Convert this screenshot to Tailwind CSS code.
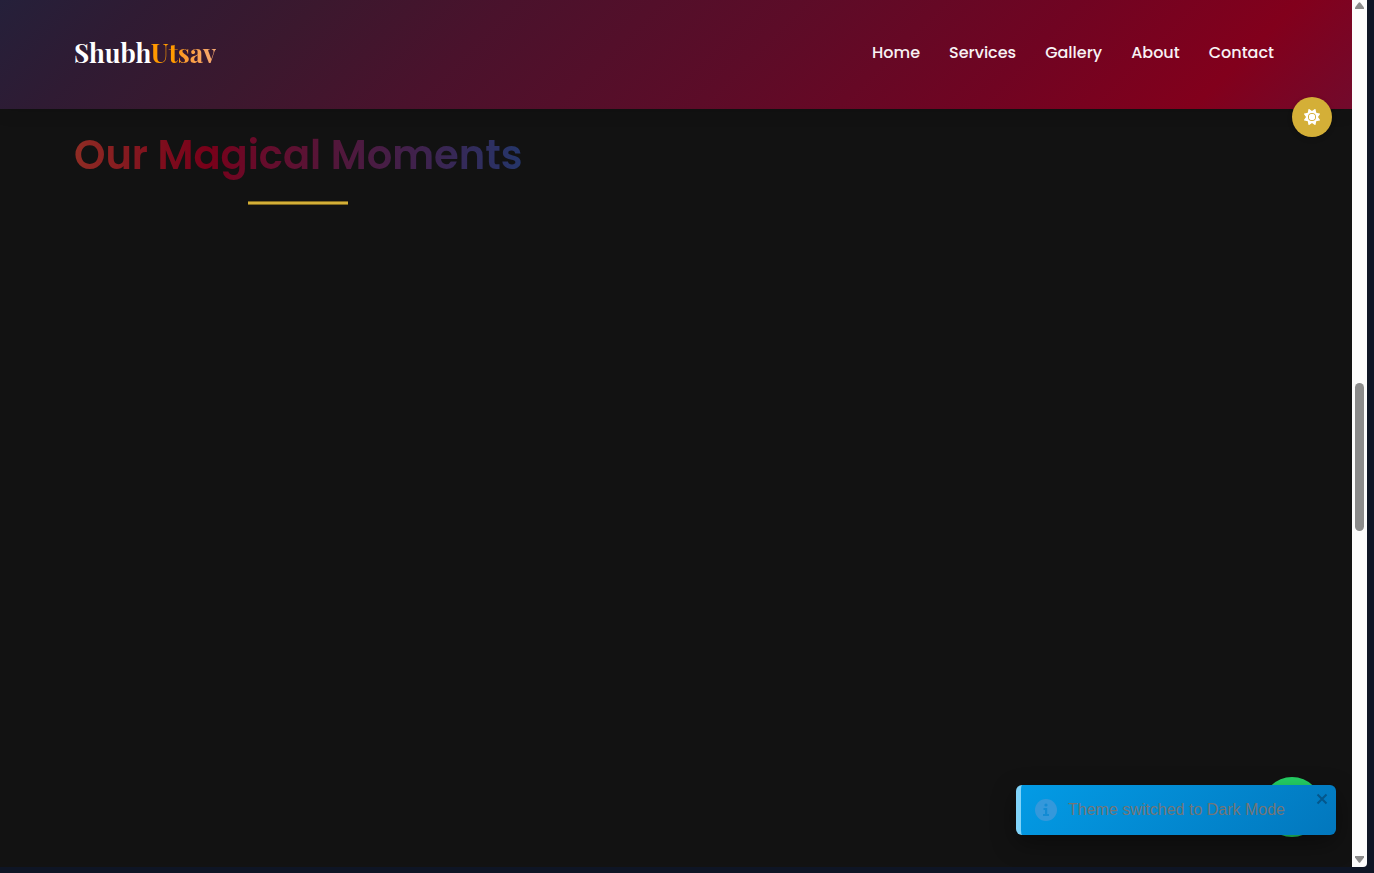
<!DOCTYPE html>
<html lang="en">
<head>
<meta charset="utf-8">
<meta name="viewport" content="width=device-width, initial-scale=1">
<title>ShubhUtsav</title>
<script src="https://cdn.jsdelivr.net/npm/@tailwindcss/browser@4"></script>
</head>
<body class="h-screen overflow-hidden bg-[#0e1525] pr-[7px] pb-[6px] font-['Poppins','Inter',sans-serif]">
<div class="flex h-full overflow-hidden rounded-br">
  <div class="relative flex min-w-0 flex-1 flex-col overflow-hidden bg-[#121212]">
    <header class="flex h-[109px] shrink-0 items-center justify-between bg-[linear-gradient(135deg,#25203a_0%,#2f1b33_10%,#3b182e_22%,#4a122c_35%,#5c0c28_55%,#700422_74%,#82001c_89%,#720a2c_100%)] pr-[78px] pb-1 pl-[74px] shadow-[0_4px_15px_rgba(0,0,0,0.1)]">
      <a href="#" class="font-['Playfair_Display','Liberation_Serif',serif] text-[26px] leading-9 font-bold text-white">Shubh<span class="bg-linear-to-r from-[#ff9900] from-40% to-[#f4a873] bg-clip-text text-transparent">Utsav</span></a>
      <nav class="flex items-center gap-[29px] text-base font-medium text-[#f8f2f4]">
        <a href="#home">Home</a>
        <a href="#services">Services</a>
        <a href="#gallery">Gallery</a>
        <a href="#about">About</a>
        <a href="#contact">Contact</a>
      </nav>
    </header>
    <main class="flex flex-1 flex-col items-start px-[74px] pt-5">
      <div class="flex flex-col items-center">
        <h2 class="bg-[linear-gradient(90deg,#8f2c24_0%,#7c0a1c_22%,#780019_30%,#6a0a28_39%,#50183c_60%,#3c2450_80%,#25366a_100%)] bg-clip-text text-[40px] leading-[52px] font-semibold text-transparent">Our Magical Moments</h2>
        <div class="mt-5 h-1 w-[100px] border-y border-[#81691f] bg-[#d4af37]"></div>
      </div>
    </main>

    <button type="button" aria-label="Toggle theme" class="absolute top-[97px] right-5 flex size-10 items-center justify-center rounded-full bg-[#d4af37] shadow-[0_2px_5px_rgba(0,0,0,0.2)]">
      <svg viewBox="0 0 512 512" class="size-4 fill-white"><path d="M361.500 1.200c5 2.100 8.600 6.600 9.600 11.900L391 121l107.900 19.800c5.300 1 9.800 4.600 11.900 9.600s1.500 10.700-1.600 15.200L446.900 256l62.300 90.300c3.100 4.500 3.700 10.200 1.600 15.200s-6.600 8.600-11.900 9.600L391 391 371.100 498.900c-1 5.300-4.600 9.800-9.600 11.900s-10.700 1.500-15.200-1.600L256 446.900l-90.300 62.300c-4.500 3.100-10.200 3.700-15.200 1.600s-8.600-6.600-9.600-11.900L121 391 13.100 371.100c-5.300-1-9.800-4.600-11.900-9.600s-1.500-10.700 1.600-15.200L65.100 256 2.800 165.700c-3.100-4.500-3.700-10.200-1.600-15.200s6.600-8.600 11.900-9.600L121 121 140.900 13.100c1-5.300 4.600-9.800 9.600-11.900s10.700-1.500 15.200 1.600L256 65.100 346.300 2.800c4.500-3.100 10.200-3.700 15.200-1.600zM160 256a96 96 0 1 1 192 0 96 96 0 1 1-192 0zm224 0a128 128 0 1 0-256 0 128 128 0 1 0 256 0z"/><circle cx="256" cy="256" r="98"/></svg>
    </button>

    <a href="#chat" aria-label="Chat with us" class="absolute right-[30px] bottom-[30px] size-[60px] rounded-full bg-[#25d366]"></a>

    <div role="status" class="absolute right-4 bottom-8 flex h-[50px] w-80 items-center rounded-md border-l-[5px] border-[#81d4fa] bg-[linear-gradient(135deg,#039be5,#0277bd)] pl-[14px] font-['Liberation_Sans',sans-serif] shadow-[0_8px_24px_rgba(0,0,0,0.4)]">
      <svg viewBox="0 0 22 22" class="mr-[11px] size-[22px] shrink-0"><circle cx="11" cy="11" r="11" fill="#3498db"/><g fill="#128bd4"><circle cx="11" cy="6" r="1.600"/><path d="M8.500 9h3.700v6H14v2H8v-2h2v-4H8.500z"/></g></svg>
      <p class="text-base whitespace-nowrap text-[#757575]">Theme switched to Dark Mode</p>
      <button type="button" aria-label="Close" class="absolute top-2 right-2 flex size-3 items-center justify-center">
        <svg viewBox="0 0 12 12" class="size-3"><path d="M1.500 1.500l9 9M10.500 1.500l-9 9" stroke="#04578c" stroke-width="2" fill="none"/></svg>
      </button>
    </div>
  </div>
  <div aria-hidden="true" class="flex w-[15px] shrink-0 flex-col items-center bg-[#fcfcfc] pt-[2px] pb-1">
    <svg viewBox="0 0 9 7" class="h-[7px] w-[9px] fill-[#8b8b8b]"><path d="M3.600.8q.9-1 1.800 0L9 5.500V7H0V5.500z"/></svg>
    <div class="flex-[374]"></div>
    <div class="w-[9px] flex-[148] rounded-full bg-[#8b8b8b]"></div>
    <div class="flex-[325]"></div>
    <svg viewBox="0 0 9 7" class="h-[7px] w-[9px] fill-[#8b8b8b]"><path d="M3.600 6.200q.9 1 1.800 0L9 1.500V0H0v1.500z"/></svg>
  </div>
</div>
</body>
</html>
